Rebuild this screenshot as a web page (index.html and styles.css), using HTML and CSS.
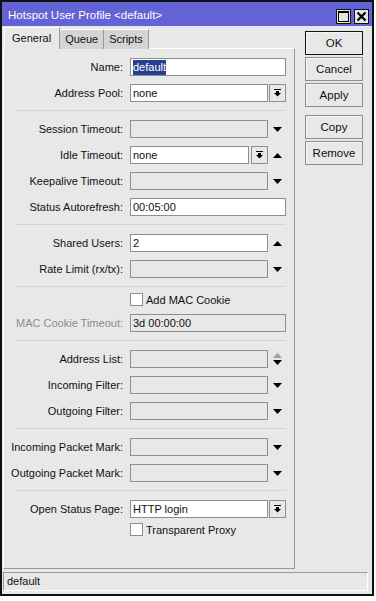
FILE: index.html
```html
<!DOCTYPE html>
<html lang="en">
<head>
    <meta charset="UTF-8">
    <title>Hotspot User Profile &lt;default&gt;</title>
    <link rel="stylesheet" href="styles.css">
</head>
<body>
    <div class="window">
        <div class="titlebar">
            <span class="title">Hotspot User Profile &lt;default&gt;</span>
            <span class="tb-btn">
                <svg width="11" height="11" viewBox="0 0 11 11"><rect x="0.5" y="0.5" width="10" height="10" fill="none" stroke="#000"/><rect x="0" y="0" width="11" height="2" fill="#000"/></svg>
            </span>
            <span class="tb-btn">
                <svg width="11" height="11" viewBox="0 0 11 11"><path d="M1.5 1.5l8 8M9.5 1.5l-8 8" stroke="#000" stroke-width="2.2"/></svg>
            </span>
        </div>

        <div class="main">
            <div class="left">
                <div class="tabs">
                    <div class="tab active">General</div>
                    <div class="tab">Queue</div>
                    <div class="tab">Scripts</div>
                </div>

                <div class="panel">
                    <div class="row">
                        <label>Name:</label>
                        <div class="field"><div class="input"><span class="sel">default</span></div></div>
                    </div>
                    <div class="row">
                        <label>Address Pool:</label>
                        <div class="field">
                            <div class="input">none</div>
                            <div class="drop"><svg width="7" height="8" viewBox="0 0 7 8"><rect x="0" y="0" width="7" height="1"/><rect x="2" y="2" width="3" height="2"/><path d="M0 4h7L3.5 7.5z"/></svg></div>
                        </div>
                    </div>

                    <div class="sep"></div>

                    <div class="row">
                        <label>Session Timeout:</label>
                        <div class="field">
                            <div class="input dis"></div>
                            <div class="arrow"><svg width="9" height="5" viewBox="0 0 9 5"><path d="M0 0h9L4.5 5z"/></svg></div>
                        </div>
                    </div>
                    <div class="row">
                        <label>Idle Timeout:</label>
                        <div class="field">
                            <div class="input">none</div>
                            <div class="drop wide"><svg width="7" height="8" viewBox="0 0 7 8"><rect x="0" y="0" width="7" height="1"/><rect x="2" y="2" width="3" height="2"/><path d="M0 4h7L3.5 7.5z"/></svg></div>
                            <div class="arrow"><svg width="9" height="5" viewBox="0 0 9 5"><path d="M0 5h9L4.5 0z"/></svg></div>
                        </div>
                    </div>
                    <div class="row">
                        <label>Keepalive Timeout:</label>
                        <div class="field">
                            <div class="input dis"></div>
                            <div class="arrow"><svg width="9" height="5" viewBox="0 0 9 5"><path d="M0 0h9L4.5 5z"/></svg></div>
                        </div>
                    </div>
                    <div class="row">
                        <label>Status Autorefresh:</label>
                        <div class="field"><div class="input">00:05:00</div></div>
                    </div>

                    <div class="sep"></div>

                    <div class="row">
                        <label>Shared Users:</label>
                        <div class="field">
                            <div class="input">2</div>
                            <div class="arrow"><svg width="9" height="5" viewBox="0 0 9 5"><path d="M0 5h9L4.5 0z"/></svg></div>
                        </div>
                    </div>
                    <div class="row">
                        <label>Rate Limit (rx/tx):</label>
                        <div class="field">
                            <div class="input dis"></div>
                            <div class="arrow"><svg width="9" height="5" viewBox="0 0 9 5"><path d="M0 0h9L4.5 5z"/></svg></div>
                        </div>
                    </div>

                    <div class="sep"></div>

                    <div class="row check-row">
                        <span></span>
                        <div class="check"><span class="box"></span>Add MAC Cookie</div>
                    </div>
                    <div class="row">
                        <label class="muted">MAC Cookie Timeout:</label>
                        <div class="field"><div class="input dis">3d 00:00:00</div></div>
                    </div>

                    <div class="sep"></div>

                    <div class="row">
                        <label>Address List:</label>
                        <div class="field">
                            <div class="input dis"></div>
                            <div class="arrow"><svg width="9" height="12" viewBox="0 0 9 12"><path d="M0 5h9L4.5 0z" fill="#a0a0a0"/><path d="M0 7h9L4.5 12z"/></svg></div>
                        </div>
                    </div>
                    <div class="row">
                        <label>Incoming Filter:</label>
                        <div class="field">
                            <div class="input dis"></div>
                            <div class="arrow"><svg width="9" height="5" viewBox="0 0 9 5"><path d="M0 0h9L4.5 5z"/></svg></div>
                        </div>
                    </div>
                    <div class="row">
                        <label>Outgoing Filter:</label>
                        <div class="field">
                            <div class="input dis"></div>
                            <div class="arrow"><svg width="9" height="5" viewBox="0 0 9 5"><path d="M0 0h9L4.5 5z"/></svg></div>
                        </div>
                    </div>

                    <div class="sep"></div>

                    <div class="row">
                        <label>Incoming Packet Mark:</label>
                        <div class="field">
                            <div class="input dis"></div>
                            <div class="arrow"><svg width="9" height="5" viewBox="0 0 9 5"><path d="M0 0h9L4.5 5z"/></svg></div>
                        </div>
                    </div>
                    <div class="row">
                        <label>Outgoing Packet Mark:</label>
                        <div class="field">
                            <div class="input dis"></div>
                            <div class="arrow"><svg width="9" height="5" viewBox="0 0 9 5"><path d="M0 0h9L4.5 5z"/></svg></div>
                        </div>
                    </div>

                    <div class="sep"></div>

                    <div class="row">
                        <label>Open Status Page:</label>
                        <div class="field">
                            <div class="input">HTTP login</div>
                            <div class="drop"><svg width="7" height="8" viewBox="0 0 7 8"><rect x="0" y="0" width="7" height="1"/><rect x="2" y="2" width="3" height="2"/><path d="M0 4h7L3.5 7.5z"/></svg></div>
                        </div>
                    </div>
                    <div class="row check-row">
                        <span></span>
                        <div class="check"><span class="box"></span>Transparent Proxy</div>
                    </div>
                </div>
            </div>

            <div class="buttons">
                <div class="btn default">OK</div>
                <div class="btn">Cancel</div>
                <div class="btn">Apply</div>
                <div class="btn spaced">Copy</div>
                <div class="btn">Remove</div>
            </div>
        </div>

        <div class="statusbar">default</div>
    </div>
</body>
</html>
```

FILE: styles.css
```css
* {
    margin: 0;
    padding: 0;
    box-sizing: border-box;
}

body {
    background: #ffffff;
    font-family: 'Liberation Sans', Arial, sans-serif;
    font-size: 11px;
    color: #111111;
}

.window {
    width: 374px;
    height: 596px;
    border: 2px solid #111111;
    background: #e8e8e8;
    display: flex;
    flex-direction: column;
}

/* Barra de titulo */
.titlebar {
    height: 24px;
    background: #6363d6;
    color: #ffffff;
    display: flex;
    align-items: flex-end;
    gap: 3px;
    padding: 0 3px 2px 6px;
}

.title {
    flex: 1;
    font-size: 11.5px;
    line-height: 15px;
    padding-bottom: 1px;
}

.tb-btn {
    width: 15px;
    height: 15px;
    background: #e4e4e4;
    border: 1px solid #111111;
    display: flex;
    align-items: center;
    justify-content: center;
}

.main {
    flex: 1;
    display: flex;
    padding: 1px 0 0 1px;
}

.left {
    width: 292px;
    display: flex;
    flex-direction: column;
}

/* Abas */
.tabs {
    display: flex;
    align-items: flex-end;
    height: 22px;
    padding-left: 1px;
    position: relative;
    z-index: 1;
    margin-bottom: -1px;
}

.tab {
    height: 20px;
    line-height: 19px;
    padding: 0 5px;
    background: #d4d4d4;
    border-top: 1px solid #ffffff;
    border-right: 1px solid #9a9a9a;
}

.tab.active {
    height: 22px;
    line-height: 21px;
    padding: 0 8px 0 7px;
    background: #e8e8e8;
    border-left: 1px solid #ffffff;
}

.panel {
    flex: 1;
    border: 1px solid;
    border-color: #ffffff #9a9a9a #9a9a9a #ffffff;
    padding-top: 9px;
    display: flex;
    flex-direction: column;
    gap: 8px;
}

/* Linhas do formulario */
.row {
    display: grid;
    grid-template-columns: 119px 156px;
    column-gap: 7px;
    height: 18px;
    align-items: center;
}

.row label {
    text-align: right;
    white-space: nowrap;
}

.row label.muted {
    color: #8c8c8c;
}

.field {
    display: flex;
    height: 18px;
}

.input {
    flex: 1;
    min-width: 0;
    background: #ffffff;
    border: 1px solid #8e8e8e;
    padding-left: 2px;
    line-height: 16px;
    white-space: nowrap;
}

.input.dis {
    background: transparent;
}

.sel {
    background: #24408e;
    color: #ffffff;
    padding: 1px 0 2px;
}

.drop {
    width: 17px;
    margin-left: 1px;
    border: 1px solid #8e8e8e;
    display: flex;
    align-items: center;
    justify-content: center;
}

.drop.wide {
    margin-left: 2px;
}

.arrow {
    width: 18px;
    display: flex;
    align-items: center;
    justify-content: center;
    padding-left: 1px;
}

.sep {
    height: 1px;
    width: 271px;
    margin: 0 0 1px 11px;
    background: #d3d3d3;
}

.check-row {
    height: 13px;
    margin-top: -3px;
}

.check {
    display: flex;
    align-items: center;
    gap: 3px;
}

.box {
    width: 13px;
    height: 13px;
    background: #ffffff;
    border: 1px solid #8e8e8e;
}

/* Botoes laterais */
.buttons {
    margin: 4px 0 0 10px;
    display: flex;
    flex-direction: column;
    gap: 2px;
}

.btn {
    width: 58px;
    height: 24px;
    line-height: 22px;
    text-align: center;
    font-size: 11.5px;
    border: 1px solid #8e8e8e;
    box-shadow: inset 1px 1px #f6f6f6;
}

.btn.default {
    border-color: #111111;
}

.btn.spaced {
    margin-top: 6px;
}

.statusbar {
    height: 19px;
    margin: 3px 4px 3px 1px;
    border: 1px solid;
    border-color: #9a9a9a #ffffff #ffffff #9a9a9a;
    padding-left: 3px;
    line-height: 17px;
}
```
